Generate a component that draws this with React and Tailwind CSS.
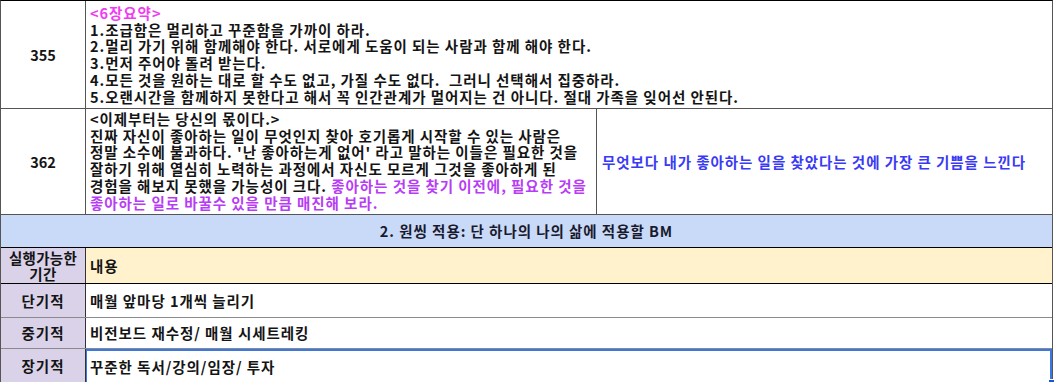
import React from "react";

const summary = [
  "1.조급함은 멀리하고 꾸준함을 가까이 하라.",
  "2.멀리 가기 위해 함께해야 한다. 서로에게 도움이 되는 사람과 함께 해야 한다.",
  "3.먼저 주어야 돌려 받는다.",
  "4.모든 것을 원하는 대로 할 수도 없고, 가질 수도 없다.  그러니 선택해서 집중하라.",
  "5.오랜시간을 함께하지 못한다고 해서 꼭 인간관계가 멀어지는 건 아니다. 절대 가족을 잊어선 안된다.",
];

const plans = [
  { term: "단기적", text: "매월 앞마당 1개씩 늘리기", h: "h-[34px]" },
  { term: "중기적", text: "비전보드 재수정/ 매월 시세트레킹", h: "h-[31px]" },
];

const App = () => {
  return (
    <div className="w-[1055px] h-[382px] overflow-hidden bg-white font-['Noto_Sans_CJK_KR',sans-serif] text-[14.5px] tracking-[0.95px] font-bold text-[#141414]">
      <div className="w-[1053px] border-t border-t-black border-l border-r border-[#555]">
        {/* 355 */}
        <div className="flex h-[108px] border-b border-[#555]">
          <div className="w-[85px] shrink-0 border-r border-[#555] flex items-center justify-center tracking-normal">355</div>
          <div className="flex-1 pl-[4px] pt-[4px] leading-[16.7px] whitespace-pre">
            <div className="text-[#f03cf0]">&lt;6장요약&gt;</div>
            {summary.map((s) => (
              <div key={s}>{s}</div>
            ))}
          </div>
        </div>

        {/* 362 */}
        <div className="flex h-[106px] border-b border-[#555]">
          <div className="w-[85px] shrink-0 border-r border-[#555] flex items-center justify-center tracking-normal">362</div>
          <div className="w-[511px] shrink-0 border-r border-[#555] pl-[4px] pt-[2px] leading-[16.7px] whitespace-nowrap">
            <div>&lt;이제부터는 당신의 몫이다.&gt;</div>
            <div>진짜 자신이 좋아하는 일이 무엇인지 찾아 호기롭게 시작할 수 있는 사람은</div>
            <div>정말 소수에 불과하다. '난 좋아하는게 없어' 라고 말하는 이들은 필요한 것을</div>
            <div>잘하기 위해 열심히 노력하는 과정에서 자신도 모르게 그것을 좋아하게 된</div>
            <div>
              경험을 해보지 못했을 가능성이 크다.{" "}
              <span className="text-[#b83cf5]">좋아하는 것을 찾기 이전에, 필요한 것을</span>
            </div>
            <div className="text-[#b83cf5]">좋아하는 일로 바꿀수 있을 만큼 매진해 보라.</div>
          </div>
          <div className="flex-1 flex items-center pl-[5px] text-[#3a3af5] whitespace-nowrap">
            무엇보다 내가 좋아하는 일을 찾았다는 것에 가장 큰 기쁨을 느낀다
          </div>
        </div>

        {/* header */}
        <div className="h-[33px] bg-[#c9daf8] border-b border-black flex items-center justify-center text-[#1a1a2e]">
          2. 원씽 적용: 단 하나의 나의 삶에 적용할 BM
        </div>

        <div className="flex h-[36px] border-b border-black">
          <div className="w-[85px] shrink-0 bg-[#d9d2e9] border-r border-[#333] flex flex-col items-center justify-center leading-[16px] tracking-[0.3px]">
            <span>실행가능한</span>
            <span>기간</span>
          </div>
          <div className="flex-1 bg-[#fff2cc] flex items-center pl-[4px]">내용</div>
        </div>

        {plans.map((p) => (
          <div key={p.term} className={`flex ${p.h} border-b border-[#8a8a8a]`}>
            <div className="w-[85px] shrink-0 bg-[#d9d2e9] border-r border-[#333] flex items-center justify-center">
              {p.term}
            </div>
            <div className="flex-1 flex items-center pl-[4px]">{p.text}</div>
          </div>
        ))}

        <div className="flex h-[40px]">
          <div className="w-[85px] shrink-0 bg-[#d9d2e9] border-r border-[#333] flex items-center justify-center pb-[6px]">
            장기적
          </div>
          <div className="relative flex-1 border-t-2 border-r-2 border-l border-[#3b78e7] flex items-center pl-[3px] pb-[6px]">
            꾸준한 독서/강의/임장/ 투자
            <span className="absolute right-[-5px] top-[28px] w-[7px] h-[7px] bg-[#1a56d6] border border-white" />
          </div>
        </div>
      </div>
    </div>
  );
};

export default App;
